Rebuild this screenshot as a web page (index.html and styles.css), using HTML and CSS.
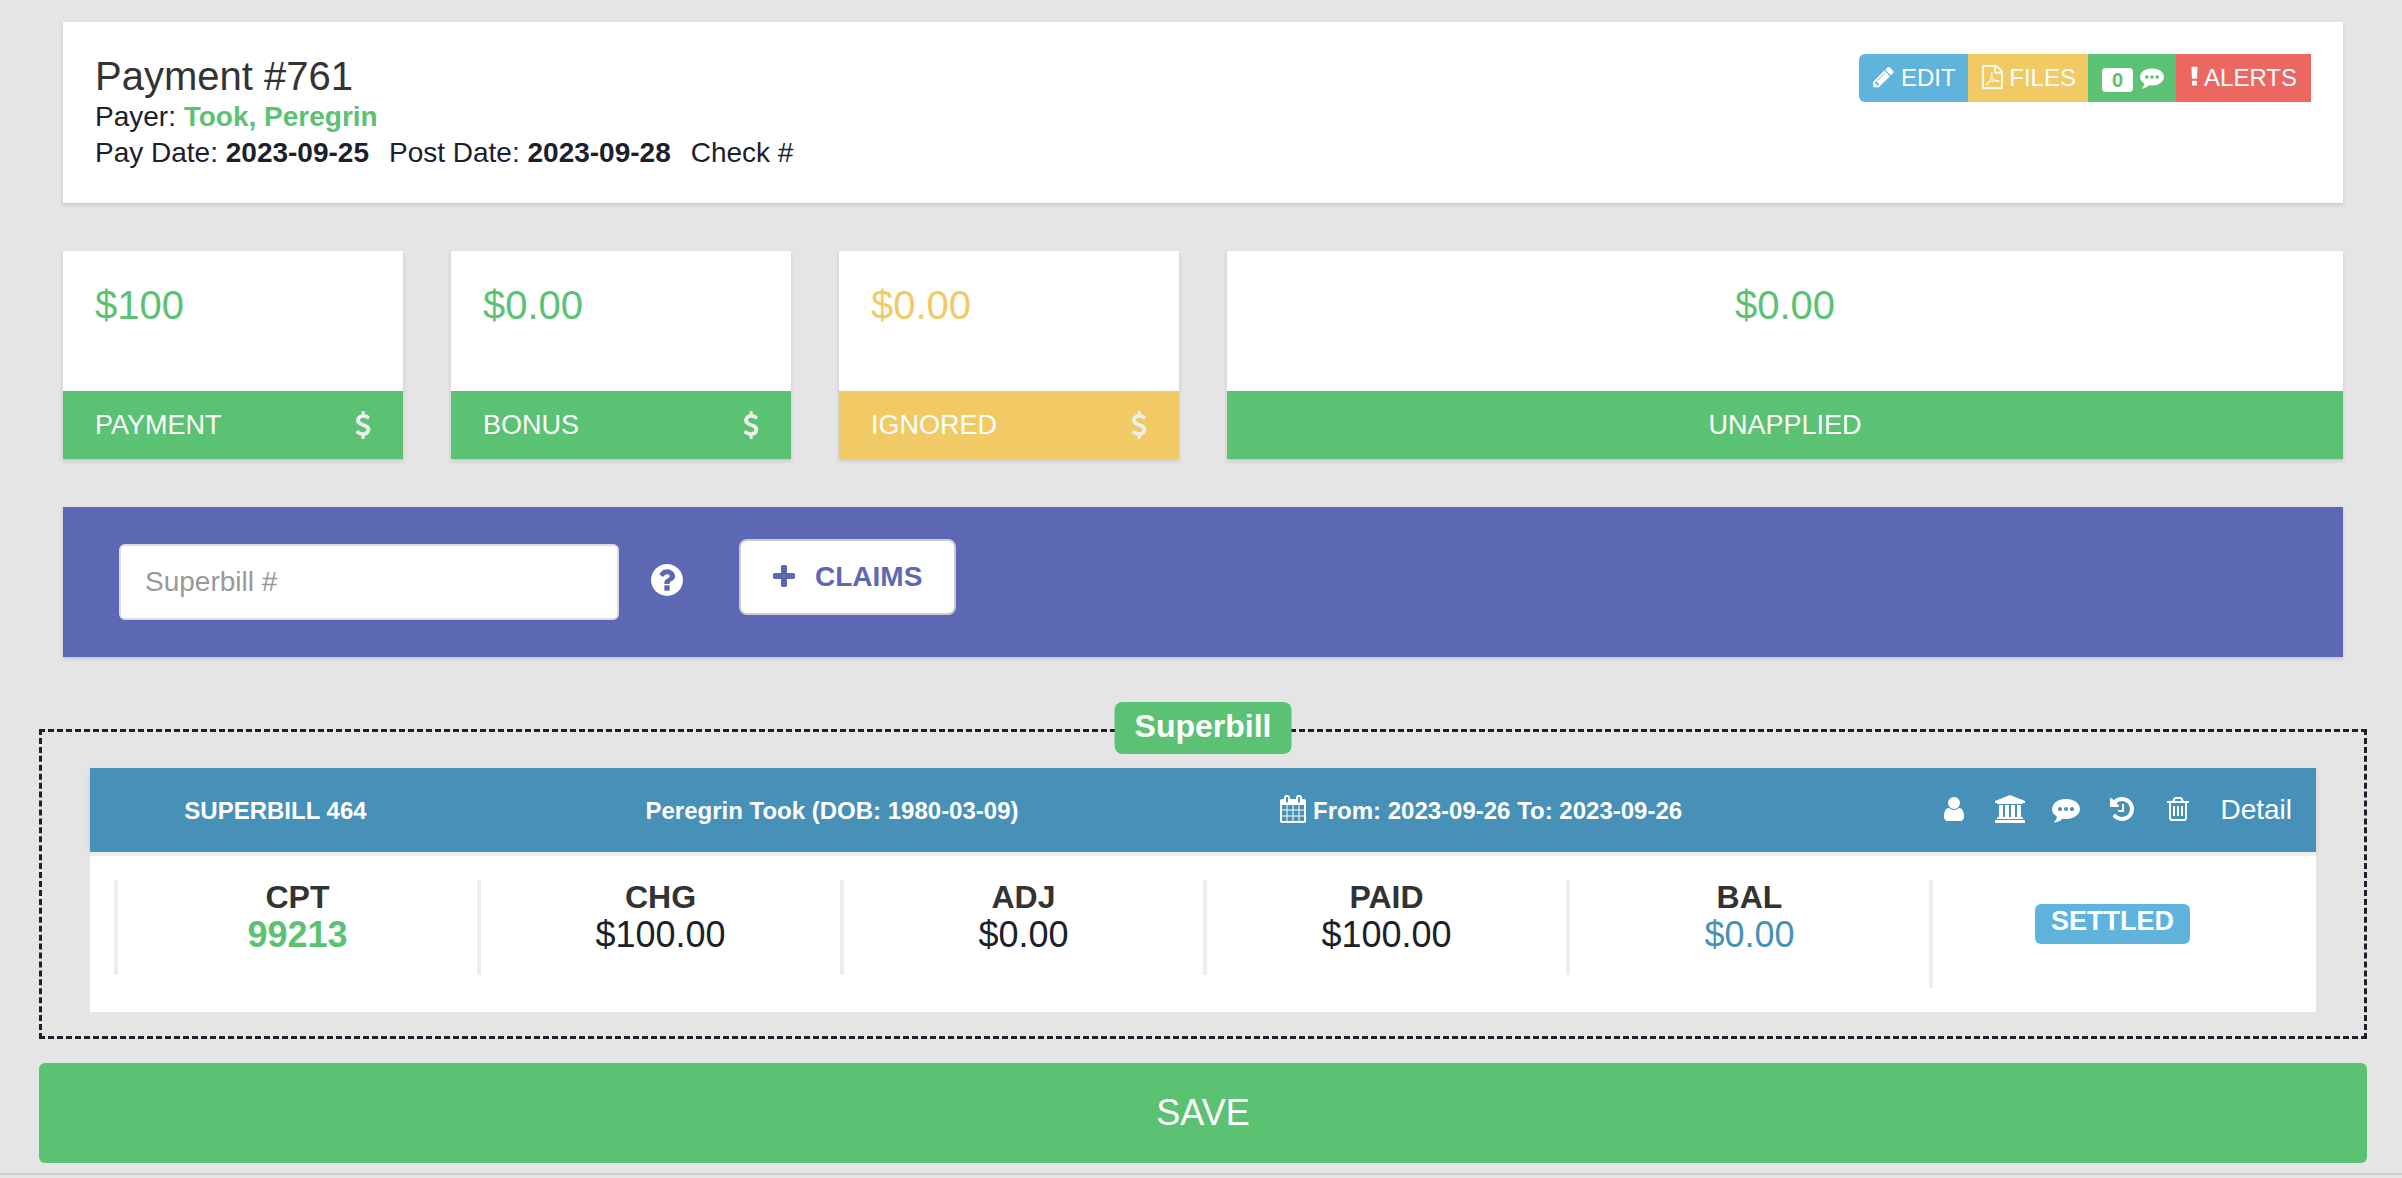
FILE: index.html
```html
<!DOCTYPE html>
<html lang="en">
<head>
<meta charset="utf-8">
<meta name="viewport" content="width=device-width, initial-scale=1">
<title>Payment #761</title>
<link rel="stylesheet" href="styles.css">
</head>
<body>
<svg class="sprite" aria-hidden="true">
  <symbol id="i-pencil" viewBox="128 0 1536 1792"><path d="M491 1536l91-91-235-235-91 91v107h128v128h107zm523-928q0-22-22-22-10 0-17 7l-542 542q-7 7-7 17 0 22 22 22 10 0 17-7l542-542q7-7 7-17zm-54-192l416 416-832 832h-416v-416zm683 96q0 53-37 90l-166 166-416-416 166-165q36-38 90-38 53 0 91 38l235 234q37 39 37 91z"/></symbol>
  <symbol id="i-pdf" viewBox="128 0 1536 1792"><path d="M1596 380q28 28 48 76t20 88v1152q0 40-28 68t-68 28h-1344q-40 0-68-28t-28-68v-1600q0-40 28-68t68-28h896q40 0 88 20t76 48zm-444-244v376h376q-10-29-22-41l-313-313q-12-12-41-22zm384 1528v-1024h-416q-40 0-68-28t-28-68v-416h-768v1536h1280zm-514-593q33 26 84 56 59-7 117-7 147 0 177 49 16 22 2 52 0 1-1 2l-2 2v1q-6 38-71 38-48 0-115-20t-130-53q-221 24-392 83-153 262-242 262-15 0-28-7l-24-12q-1-1-6-5-10-10-6-36 9-40 56-91.5t132-96.5q14-9 23 6 2 2 2 4 52-85 107-197 68-136 104-262-24-82-30.5-159.5t6.5-127.5q11-40 42-40h22q23 0 35 15 18 21 9 68-2 6-4 8 1 3 1 8v30q-2 123-14 192 55 164 146 238zm-576 411q52-24 137-158-51 40-87.5 84t-49.5 74zm398-920q-15 42-2 132 1-7 7-44 0-3 7-43 1-4 4-8-1-1-1-2-1-2-1-3-1-22-13-36 0 1-1 2v2zm-124 661q135-54 284-81-2-1-13-9.5t-16-13.5q-76-67-127-176-27 86-83 197-30 56-45 83zm646-16q-24-24-140-24 76 28 124 28 14 0 18-1 0-1-2-3z"/></symbol>
  <symbol id="i-comment" viewBox="0 0 1792 1792"><path d="M640 896q0-53-37.500-90.500t-90.500-37.500-90.500 37.500-37.500 90.500 37.500 90.500 90.500 37.500 90.500-37.500 37.500-90.500zm384 0q0-53-37.500-90.500t-90.500-37.500-90.500 37.500-37.500 90.500 37.500 90.500 90.500 37.500 90.500-37.500 37.500-90.500zm384 0q0-53-37.500-90.500t-90.500-37.500-90.500 37.500-37.500 90.500 37.500 90.500 90.500 37.500 90.500-37.500 37.500-90.500zm384 0q0 174-120 321.500t-326 233-450 85.500q-110 0-211-18-173 173-435 229-52 10-86 13-12 1-22-6t-13-18q-4-15 20-37 5-5 23.500-21.500t25.500-23.500 23.500-25.500 24-31.500 20.500-37 20-48 14.500-57.500 12.500-72.500q-146-90-229.500-216.500t-83.500-269.500q0-174 120-321.500t326-233 450-85.500 450 85.500 326 233 120 321.500z"/></symbol>
  <symbol id="i-bang" viewBox="576 0 640 1792"><path d="M1088 1248v224q0 26-19 45t-45 19h-256q-26 0-45-19t-19-45v-224q0-26 19-45t45-19h256q26 0 45 19t19 45zm30-1056l-28 768q-1 26-20.500 45t-45.500 19h-256q-26 0-45.500-19t-20.500-45l-28-768q-1-26 17.500-45t44.500-19h320q26 0 44.500 19t17.500 45z"/></symbol>
  <symbol id="i-usd" viewBox="384 0 1024 1792"><path d="M1362 1185q0 153-99.500 263.500t-258.500 136.500v175q0 14-9 23t-23 9h-135q-13 0-22.500-9.500t-9.500-22.500v-175q-66-9-127.500-31t-101.500-44.500-74-48-46.500-37.500-17.500-18q-17-21-2-41l103-135q7-10 23-12 15-2 24 9l2 2q113 99 243 125 37 8 74 8 81 0 142.500-43t61.500-122q0-28-15-53t-33.500-42-58.500-37.500-66-32-80-32.500q-39-16-61.500-25t-61.500-26.500-62.500-31-56.500-35.500-53.500-42.500-43.500-49-35.500-58-21-66.500-8.500-78q0-138 98-242t255-134v-180q0-13 9.500-22.500t22.500-9.500h135q14 0 23 9t9 23v176q57 6 110.500 23t87 33.500 63.500 37.500 39 29 15 14q17 18 5 38l-81 146q-8 15-23 16-14 3-27-7-3-3-14.500-12t-39-26.500-58.500-32-74.500-26-85.500-11.500q-95 0-155 43t-60 111q0 26 8.500 48t29.500 41.500 39.500 33 56 31 60.500 27 70 27.500q53 20 81 31.500t76 35 75.500 42.500 62 50 53 63.500 31.500 76.500 13 94z"/></symbol>
  <symbol id="i-question" viewBox="128 128 1536 1536"><path d="M1024 1376v-192q0-14-9-23t-23-9h-192q-14 0-23 9t-9 23v192q0 14 9 23t23 9h192q14 0 23-9t9-23zm256-672q0-88-55.500-163t-138.500-116-170-41q-243 0-371 213-15 24 8 42l132 100q7 6 19 6 16 0 25-12 53-68 86-92 34-24 86-24 48 0 85.500 26t37.500 59q0 38-20 61t-68 45q-63 28-115.500 86.500t-52.500 125.500v36q0 14 9 23t23 9h192q14 0 23-9t9-23q0-19 21.500-49.500t54.500-49.500q32-18 49-28.500t46-35 44.500-48 28-60.500 12.500-81zm384 192q0 209-103 385.500t-279.500 279.500-385.500 103-385.500-103-279.500-279.500-103-385.500 103-385.500 279.500-279.500 385.500-103 385.500 103 279.500 279.500 103 385.500z"/></symbol>
  <symbol id="i-plus" viewBox="192 0 1408 1792"><path d="M1600 736v192q0 40-28 68t-68 28h-416v416q0 40-28 68t-68 28h-192q-40 0-68-28t-28-68v-416h-416q-40 0-68-28t-28-68v-192q0-40 28-68t68-28h416v-416q0-40 28-68t68-28h192q40 0 68 28t28 68v416h416q40 0 68 28t28 68z"/></symbol>
  <symbol id="i-calendar" viewBox="64 0 1664 1792"><path d="M192 1664h288v-288h-288v288zm352 0h320v-288h-320v288zm-352-352h288v-320h-288v320zm352 0h320v-320h-320v320zm-352-384h288v-288h-288v288zm736 736h320v-288h-320v288zm-384-736h320v-288h-320v288zm768 736h288v-288h-288v288zm-384-352h320v-320h-320v320zm-352-864v-288q0-13-9.500-22.500t-22.500-9.500h-64q-13 0-22.500 9.500t-9.500 22.500v288q0 13 9.500 22.500t22.500 9.500h64q13 0 22.500-9.500t9.500-22.500zm736 864h288v-320h-288v320zm-384-384h320v-288h-320v288zm384 0h288v-288h-288v288zm32-480v-288q0-13-9.500-22.500t-22.500-9.500h-64q-13 0-22.500 9.500t-9.500 22.500v288q0 13 9.500 22.500t22.500 9.500h64q13 0 22.500-9.500t9.500-22.500zm384-64v1280q0 52-38 90t-90 38h-1408q-52 0-90-38t-38-90v-1280q0-52 38-90t90-38h128v-96q0-66 47-113t113-47h64q66 0 113 47t47 113v96h384v-96q0-66 47-113t113-47h64q66 0 113 47t47 113v96h128q52 0 90 38t38 90z"/></symbol>
  <symbol id="i-user" viewBox="256 0 1280 1792"><path d="M1536 1399q0 109-62.500 187t-150.500 78h-854q-88 0-150.500-78t-62.500-187q0-85 8.500-160.500t31.500-152 58.500-131 94-89 134.500-34.500q131 128 313 128t313-128q76 0 134.500 34.500t94 89 58.500 131 31.500 152 8.500 160.500zm-256-887q0 159-112.500 271.500t-271.500 112.500-271.500-112.500-112.500-271.500 112.500-271.500 271.500-112.500 271.500 112.500 112.500 271.500z"/></symbol>
  <symbol id="i-bank" viewBox="0 0 1920 1792"><path d="M960 0l960 384v128h-128q0 26-20.500 45t-48.500 19h-1526q-28 0-48.500-19t-20.500-45h-128v-128zm-704 640h256v768h128v-768h256v768h128v-768h256v768h128v-768h256v768h59q28 0 48.500 19t20.500 45v64h-1664v-64q0-26 20.500-45t48.500-19h59v-768zm1595 960q28 0 48.500 19t20.500 45v128h-1920v-128q0-26 20.500-45t48.500-19h1782z"/></symbol>
  <symbol id="i-history" viewBox="128 0 1536 1792"><path d="M1664 896q0 156-61 298t-164 245-245 164-298 61q-172 0-327-72.500t-264-204.500q-7-10-6.500-22.500t8.500-20.500l137-138q10-9 25-9 16 2 23 12 73 95 179 147t225 52q104 0 198.500-40.500t163.500-109.500 109.500-163.500 40.500-198.500-40.500-198.500-109.500-163.500-163.500-109.500-198.500-40.500q-98 0-188 35.500t-160 101.500l137 138q31 30 14 69-17 40-59 40h-448q-26 0-45-19t-19-45v-448q0-42 40-59 39-17 69 14l130 129q107-101 244.500-156.500t284.500-55.500q156 0 298 61t245 164 164 245 61 298zm-640-288v448q0 14-9 23t-23 9h-320q-14 0-23-9t-9-23v-64q0-14 9-23t23-9h224v-352q0-14 9-23t23-9h64q14 0 23 9t9 23z"/></symbol>
  <symbol id="i-trash" viewBox="192 0 1408 1792"><path d="M704 736v576q0 14-9 23t-23 9h-64q-14 0-23-9t-9-23v-576q0-14 9-23t23-9h64q14 0 23 9t9 23zm256 0v576q0 14-9 23t-23 9h-64q-14 0-23-9t-9-23v-576q0-14 9-23t23-9h64q14 0 23 9t9 23zm256 0v576q0 14-9 23t-23 9h-64q-14 0-23-9t-9-23v-576q0-14 9-23t23-9h64q14 0 23 9t9 23zm128 724v-948h-896v948q0 22 7 40.500t14.500 27 10.500 8.500h832q3 0 10.500-8.500t14.500-27 7-40.500zm-672-1076h448l-48-117q-7-9-17-11h-317q-10 2-17 11zm928 32v64q0 14-9 23t-23 9h-96v948q0 83-47 143.500t-113 60.500h-832q-66 0-113-58.500t-47-141.500v-952h-96q-14 0-23-9t-9-23v-64q0-14 9-23t23-9h309l70-167q15-37 54-63t79-26h320q40 0 79 26t54 63l70 167h309q14 0 23 9t9 23z"/></symbol>
</svg>

<main class="page">
  <header class="card summary">
    <div>
      <h1 class="summary-title">Payment #761</h1>
      <p class="summary-line">Payer: <a class="payer" href="#payer">Took, Peregrin</a></p>
      <p class="summary-line dates">
        <span>Pay Date: <b>2023-09-25</b></span>
        <span>Post Date: <b>2023-09-28</b></span>
        <span>Check #</span>
      </p>
    </div>
    <div class="actions">
      <button class="action action-info" type="button"><svg class="icon w21"><use href="#i-pencil"/></svg> EDIT</button>
      <button class="action action-warning" type="button"><svg class="icon w21"><use href="#i-pdf"/></svg> FILES</button>
      <button class="action action-success" type="button" aria-label="Comments"><span class="count">0</span> <svg class="icon w24"><use href="#i-comment"/></svg></button>
      <button class="action action-danger" type="button"><svg class="icon w9"><use href="#i-bang"/></svg> ALERTS</button>
    </div>
  </header>

  <section class="stats">
    <article class="card stat">
      <p class="stat-value">$100</p>
      <div class="stat-label"><h2>PAYMENT</h2><svg class="stat-icon"><use href="#i-usd"/></svg></div>
    </article>
    <article class="card stat">
      <p class="stat-value">$0.00</p>
      <div class="stat-label"><h2>BONUS</h2><svg class="stat-icon"><use href="#i-usd"/></svg></div>
    </article>
    <article class="card stat stat-warning">
      <p class="stat-value">$0.00</p>
      <div class="stat-label"><h2>IGNORED</h2><svg class="stat-icon"><use href="#i-usd"/></svg></div>
    </article>
    <article class="card stat stat-wide">
      <p class="stat-value">$0.00</p>
      <div class="stat-label"><h2>UNAPPLIED</h2></div>
    </article>
  </section>

  <form class="card lookup">
    <input class="lookup-input" type="text" placeholder="Superbill #" aria-label="Superbill #">
    <button class="help" type="button" aria-label="Help"><svg class="help-icon"><use href="#i-question"/></svg></button>
    <button class="claims" type="button"><svg class="claims-icon"><use href="#i-plus"/></svg>CLAIMS</button>
  </form>

  <section class="group">
    <h2 class="group-tag">Superbill</h2>
    <header class="bill-head">
      <h3>SUPERBILL 464</h3>
      <h3>Peregrin Took (DOB: 1980-03-09)</h3>
      <h3><svg class="calendar-icon"><use href="#i-calendar"/></svg> From: 2023-09-26 To: 2023-09-26</h3>
      <nav class="tools">
        <button class="tool" type="button" aria-label="Patient"><svg class="tool-icon"><use href="#i-user"/></svg></button>
        <button class="tool" type="button" aria-label="Insurance"><svg class="tool-icon"><use href="#i-bank"/></svg></button>
        <button class="tool" type="button" aria-label="Comments"><svg class="tool-icon"><use href="#i-comment"/></svg></button>
        <button class="tool" type="button" aria-label="History"><svg class="tool-icon"><use href="#i-history"/></svg></button>
        <button class="tool" type="button" aria-label="Delete"><svg class="tool-icon"><use href="#i-trash"/></svg></button>
        <a class="detail" href="#detail">Detail</a>
      </nav>
    </header>
    <div class="bill-body">
      <dl class="cell"><dt>CPT</dt><dd class="code">99213</dd></dl>
      <dl class="cell"><dt>CHG</dt><dd>$100.00</dd></dl>
      <dl class="cell"><dt>ADJ</dt><dd>$0.00</dd></dl>
      <dl class="cell"><dt>PAID</dt><dd>$100.00</dd></dl>
      <dl class="cell"><dt>BAL</dt><dd class="balance">$0.00</dd></dl>
      <div class="cell cell-status"><span class="status">SETTLED</span></div>
    </div>
  </section>

  <button class="save" type="button">SAVE</button>
</main>
<hr class="rule">
</body>
</html>
```
FILE: styles.css
```css
:root {
  --green: #5bc274;
  --yellow: #f1ca65;
  --red: #ed6762;
  --sky: #60b3dd;
  --steel: #4791b9;
  --indigo: #5d68b5;
  --line: #eee;
  --text: #1b212a;
}

* {
  box-sizing: border-box;
}

body {
  margin: 0;
  background: #e5e5e5;
  color: var(--text);
  font-family: "Liberation Sans", Arial, Helvetica, sans-serif;
  font-size: 28px;
  line-height: 36px;
}

h1, h2, h3, p, dl, dd {
  margin: 0;
}

button, input {
  border: 0;
  padding: 0;
  font: inherit;
  color: inherit;
}

button {
  background: none;
  cursor: pointer;
}

svg {
  fill: currentColor;
}

.sprite {
  position: absolute;
  width: 0;
  height: 0;
}

.page {
  padding: 22px 35px 10px 39px;
}

.card {
  margin: 0 24px 48px;
  background: #fff;
  box-shadow: 0 2px 4px rgba(0, 0, 0, .14);
}

/* Payment summary */
.summary {
  display: flex;
  justify-content: space-between;
  align-items: flex-start;
  padding: 32px;
}

.summary-title {
  margin-bottom: 1px;
  color: #333;
  font-size: 40px;
  font-weight: 400;
  line-height: 44px;
}

.payer {
  color: var(--green);
  font-weight: 700;
  text-decoration: none;
}

.dates {
  display: flex;
  gap: 20px;
}

.actions {
  display: flex;
  color: #fff;
}

.action {
  height: 48px;
  padding: 0 12px 0 14px;
  font-size: 24px;
  line-height: 48px;
  white-space: nowrap;
}

.action:first-child {
  border-radius: 6px 0 0 6px;
}

.action:last-child {
  padding-right: 14px;
}

.action-info { background: var(--sky); }
.action-warning { background: var(--yellow); }
.action-success { background: var(--green); }
.action-danger { background: var(--red); }

.icon {
  height: 24px;
  vertical-align: -3px;
}

.w9 { width: 9px; }
.w21 { width: 21px; }
.w24 { width: 24px; }

.count {
  display: inline-block;
  padding: 0 10px;
  border-radius: 4px;
  background: #fff;
  color: var(--green);
  font-size: 20px;
  font-weight: 700;
  line-height: 24px;
  vertical-align: -1px;
}

/* Totals */
.stats {
  display: grid;
  grid-template-columns: repeat(12, 1fr);
  column-gap: 48px;
  margin: 0 24px 48px;
}

.stat {
  grid-column: span 2;
  margin: 0;
  color: var(--green);
}

.stat-wide {
  grid-column: span 6;
  text-align: center;
}

.stat-value {
  padding: 32px 32px 64px;
  font-size: 40px;
  line-height: 44px;
}

.stat-label {
  display: flex;
  justify-content: space-between;
  align-items: center;
  padding: 16px 32px;
  background: var(--green);
  color: #fff;
}

.stat-label h2 {
  font-size: 27px;
  font-weight: 400;
}

.stat-wide .stat-label {
  justify-content: center;
}

.stat-icon {
  width: 16px;
  height: 28px;
  color: #eee;
}

.stat-warning {
  color: var(--yellow);
}

.stat-warning .stat-label {
  background: var(--yellow);
}

/* Superbill lookup */
.lookup {
  display: flex;
  align-items: center;
  margin-bottom: 72px;
  padding: 32px 56px;
  background: var(--indigo);
}

.lookup-input {
  width: 500px;
  height: 76px;
  padding: 0 24px;
  border: 2px solid #ddd;
  border-radius: 6px;
  background: #fff;
}

.lookup-input::placeholder {
  color: #999;
  opacity: 1;
}

.help {
  display: flex;
  margin: 0 56px 4px 32px;
  color: #fff;
}

.help-icon {
  width: 32px;
  height: 32px;
}

.claims {
  display: flex;
  align-items: center;
  gap: 20px;
  height: 76px;
  margin-bottom: 10px;
  padding: 0 32px;
  border: 2px solid #ccc;
  border-radius: 8px;
  background: #fff;
  color: var(--indigo);
  font-weight: 700;
}

.claims-icon {
  width: 22px;
  height: 28px;
}

/* Superbill group */
.group {
  position: relative;
  margin-bottom: 24px;
  padding: 36px 48px 24px;
  border: 3px dashed var(--text);
}

.group-tag {
  position: absolute;
  top: -30px;
  left: 50%;
  transform: translateX(-50%);
  padding: 6px 20px 10px;
  border-radius: 8px;
  background: var(--green);
  color: #fff;
  font-size: 32px;
}

.bill-head {
  display: grid;
  grid-template-columns: 2fr 4fr 3fr 3fr;
  align-items: center;
  height: 84px;
  background: var(--steel);
  color: #fff;
  text-align: center;
  box-shadow: 0 2px 4px rgba(0, 0, 0, .14);
}

.bill-head h3 {
  padding-top: 2px;
  font-size: 24px;
}

.calendar-icon {
  width: 26px;
  height: 28px;
  vertical-align: -4px;
}

.tools {
  display: flex;
  justify-content: flex-end;
  align-items: center;
  gap: 24px;
  padding-right: 24px;
}

.tool {
  display: flex;
  margin-bottom: 2px;
}

.tool-icon {
  width: 32px;
  height: 28px;
}

.detail {
  margin-left: 2px;
  color: #fff;
  text-decoration: none;
}

.bill-body {
  position: relative;
  display: grid;
  grid-template-columns: repeat(6, 1fr);
  align-items: start;
  padding: 24px;
  border-top: 4px solid var(--line);
  background: #fff;
}

.cell {
  padding-bottom: 19px;
  border-left: 4px solid var(--line);
  text-align: center;
}

.cell dt {
  color: #333;
  font-size: 32px;
  font-weight: 700;
  line-height: 34px;
}

.cell dd {
  font-size: 36px;
  line-height: 42px;
}

.cell .code {
  color: var(--green);
  font-weight: 700;
}

.cell .balance {
  color: var(--steel);
}

.cell-status {
  display: flex;
  justify-content: center;
  padding: 24px 0 44px;
}

.status {
  padding: 2px 16px 8px;
  border-radius: 6px;
  background: var(--sky);
  color: #fff;
  font-size: 27px;
  font-weight: 700;
  line-height: 30px;
}

.save {
  display: block;
  width: 100%;
  height: 100px;
  border-radius: 6px;
  background: var(--green);
  color: #fff;
  font-size: 36px;
}

.rule {
  margin: 0;
  border: 0;
  border-top: 2px solid #ccc;
}
```
